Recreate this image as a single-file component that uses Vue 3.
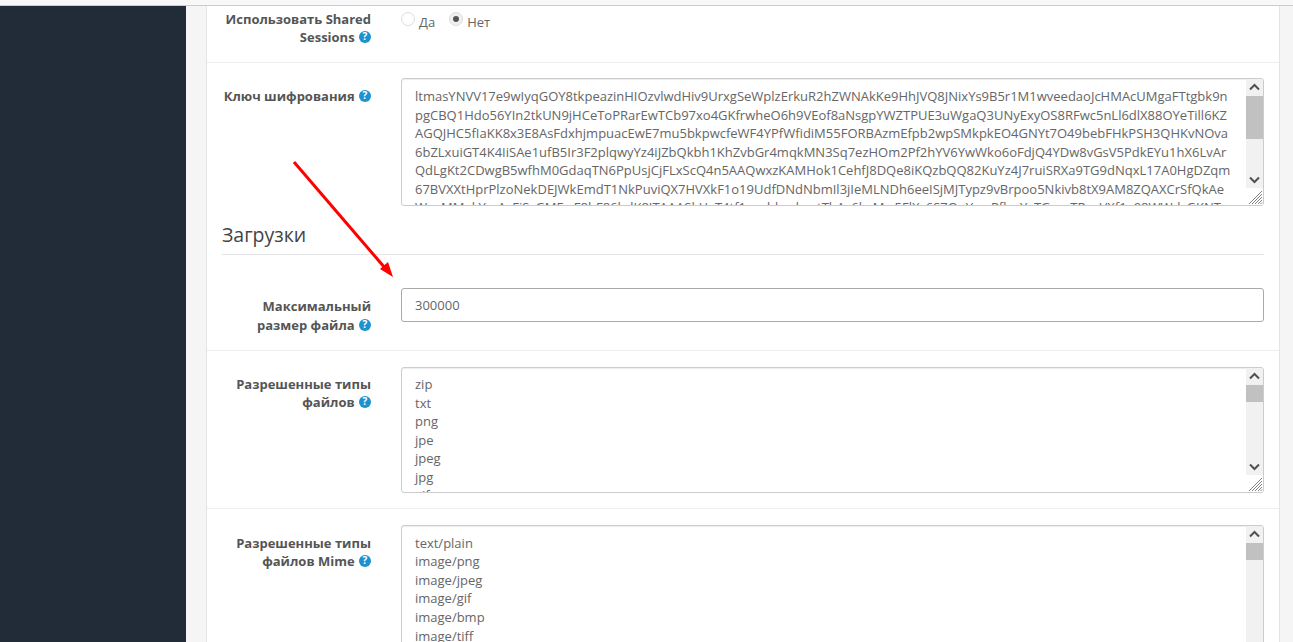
<script setup>
const keyLines = [
  'ltmasYNVV17e9wIyqGOY8tkpeazinHIOzvlwdHiv9UrxgSeWplzErkuR2hZWNAkKe9HhJVQ8JNixYs9B5r1M1wveedaoJcHMAcUMgaFTtgbk9n',
  'pgCBQ1Hdo56YIn2tkUN9jHCeToPRarEwTCb97xo4GKfrwheO6h9VEof8aNsgpYWZTPUE3uWgaQ3UNyExyOS8RFwc5nLl6dlX88OYeTill6KZ',
  'AGQJHC5fIaKK8x3E8AsFdxhjmpuacEwE7mu5bkpwcfeWF4YPfWfidiM55FORBAzmEfpb2wpSMkpkEO4GNYt7O49bebFHkPSH3QHKvNOva',
  '6bZLxuiGT4K4IiSAe1ufB5Ir3F2plqwyYz4iJZbQkbh1KhZvbGr4mqkMN3Sq7ezHOm2Pf2hYV6YwWko6oFdjQ4YDw8vGsV5PdkEYu1hX6LvAr',
  'QdLgKt2CDwgB5wfhM0GdaqTN6PpUsjCjFLxScQ4n5AAQwxzKAMHok1CehfJ8DQe8iKQzbQQ82KuYz4J7ruiSRXa9TG9dNqxL17A0HgDZqm',
  '67BVXXtHprPlzoNekDEJWkEmdT1NkPuviQX7HVXkF1o19UdfDNdNbmIl3jIeMLNDh6eeISjMJTypz9vBrpoo5Nkivb8tX9AM8ZQAXCrSfQkAe',
  'WsoMMakYmAsFiSzGMEwF8hF86bdK8ITAAAShVoT4tf1wsddzxdwntTbAs6bcMw5FlXc6S7OuYowPfkwYyTGmoTRaxVXf1g98WWdzGKNT'
]
const typeLines = ['zip', 'txt', 'png', 'jpe', 'jpeg', 'jpg', 'gif']
const mimeLines = ['text/plain', 'image/png', 'image/jpeg', 'image/gif', 'image/bmp', 'image/tiff', 'image/svg+xml']
</script>

<template>
  <div class="page">
    <div class="topbar"></div>
    <div class="body">
      <aside class="sidebar"></aside>
      <main class="gutter">
        <section class="panel">
          <div class="row row-radio">
            <div class="label">
              Использовать Shared<br />Sessions
              <svg class="help" viewBox="0 0 12 12"><circle cx="6" cy="6" r="6" fill="#1e91cf" /><text x="6" y="9.4" text-anchor="middle" class="help-mark">?</text></svg>
            </div>
            <div class="radios">
              <span class="radio"></span><span class="radio-text">Да</span>
              <span class="radio checked"></span><span class="radio-text">Нет</span>
            </div>
          </div>

          <div class="row row-key">
            <div class="label">
              Ключ шифрования
              <svg class="help" viewBox="0 0 12 12"><circle cx="6" cy="6" r="6" fill="#1e91cf" /><text x="6" y="9.4" text-anchor="middle" class="help-mark">?</text></svg>
            </div>
            <div class="area area-key">
              <div class="area-text"><div v-for="l in keyLines" :key="l">{{ l }}</div></div>
              <div class="scroll">
                <svg class="arrow" viewBox="0 0 17 17"><path d="M4 10.5 8.5 6 13 10.5" /></svg>
                <div class="track"><div class="thumb thumb-key"></div></div>
                <svg class="arrow" viewBox="0 0 17 17"><path d="M4 6.5 8.5 11 13 6.5" /></svg>
              </div>
              <svg class="grip" viewBox="0 0 15 15"><path d="M14 1 1 14M14 4 4 14M14 7 7 14M14 10 10 14M14 12.5 12.5 14" /></svg>
            </div>
          </div>

          <div class="heading-wrap">
            <h3 class="heading">Загрузки</h3>
          </div>

          <div class="row row-size">
            <div class="label">
              Максимальный<br />размер файла
              <svg class="help" viewBox="0 0 12 12"><circle cx="6" cy="6" r="6" fill="#1e91cf" /><text x="6" y="9.4" text-anchor="middle" class="help-mark">?</text></svg>
            </div>
            <div class="input">300000</div>
          </div>

          <div class="row row-types">
            <div class="label">
              Разрешенные типы<br />файлов
              <svg class="help" viewBox="0 0 12 12"><circle cx="6" cy="6" r="6" fill="#1e91cf" /><text x="6" y="9.4" text-anchor="middle" class="help-mark">?</text></svg>
            </div>
            <div class="area area-list">
              <div class="area-text"><div v-for="l in typeLines" :key="l">{{ l }}</div></div>
              <div class="scroll">
                <svg class="arrow" viewBox="0 0 17 17"><path d="M4 10.5 8.5 6 13 10.5" /></svg>
                <div class="track"><div class="thumb thumb-list"></div></div>
                <svg class="arrow" viewBox="0 0 17 17"><path d="M4 6.5 8.5 11 13 6.5" /></svg>
              </div>
              <svg class="grip" viewBox="0 0 15 15"><path d="M14 1 1 14M14 4 4 14M14 7 7 14M14 10 10 14M14 12.5 12.5 14" /></svg>
            </div>
          </div>

          <div class="row row-mime">
            <div class="label">
              Разрешенные типы<br />файлов Mime
              <svg class="help" viewBox="0 0 12 12"><circle cx="6" cy="6" r="6" fill="#1e91cf" /><text x="6" y="9.4" text-anchor="middle" class="help-mark">?</text></svg>
            </div>
            <div class="area area-list">
              <div class="area-text"><div v-for="l in mimeLines" :key="l">{{ l }}</div></div>
              <div class="scroll">
                <svg class="arrow" viewBox="0 0 17 17"><path d="M4 10.5 8.5 6 13 10.5" /></svg>
                <div class="track"><div class="thumb thumb-list"></div></div>
                <svg class="arrow" viewBox="0 0 17 17"><path d="M4 6.5 8.5 11 13 6.5" /></svg>
              </div>
              <svg class="grip" viewBox="0 0 15 15"><path d="M14 1 1 14M14 4 4 14M14 7 7 14M14 10 10 14M14 12.5 12.5 14" /></svg>
            </div>
          </div>
        </section>
      </main>
    </div>

    <svg class="annotation" viewBox="0 0 1293 642">
      <path d="M294 162 385 268" stroke="#f00" stroke-width="3" fill="none" />
      <path d="M393 277 380 269 388 262Z" fill="#f00" />
    </svg>
  </div>
</template>

<style scoped>
.page {
  position: relative;
  width: 1293px;
  height: 642px;
  overflow: hidden;
  background: #f5f5f5;
  font-family: "Open Sans", sans-serif;
  font-size: 13px;
  line-height: 18.57px;
  color: #666;
}
.topbar {
  height: 5px;
  background: #f8f8fb;
  border-bottom: 1px solid #ccc;
}
.body {
  display: flex;
  height: 636px;
}
.sidebar {
  width: 186px;
  flex: none;
  background: #222c38;
}
.gutter {
  flex: 1;
  padding: 0 13px 0 20px;
  min-width: 0;
}
.panel {
  background: #fff;
  border-left: 1px solid #e4e4e4;
  border-right: 1px solid #e4e4e4;
  height: 100%;
  overflow: hidden;
}
.row {
  display: flex;
  align-items: flex-start;
  padding: 0 15px 0 0;
  border-bottom: 1px solid #ededed;
}
.label {
  width: 164px;
  flex: none;
  margin-right: 30px;
  text-align: right;
  font-weight: 700;
  color: #555;
}
.help {
  display: inline-block;
  width: 12px;
  height: 12px;
  vertical-align: -1px;
  margin-left: 1px;
  overflow: visible;
}
.help-mark {
  font-family: "Open Sans", sans-serif;
  font-size: 10px;
  font-weight: 700;
  fill: #fff;
}
.row-radio {
  height: 56px;
}
.row-radio .label {
  margin-top: 3.7px;
}
.radios {
  display: flex;
  align-items: flex-start;
  margin-top: 5px;
}
.radio {
  width: 14px;
  height: 14px;
  margin-top: 1px;
  border-radius: 50%;
  border: 1px solid #ddd;
  background: #fff;
  box-sizing: border-box;
  position: relative;
}
.radio.checked {
  background: #f0f0f0;
}
.radio.checked::after {
  content: "";
  position: absolute;
  inset: 3px;
  border-radius: 50%;
  background: #555;
}
.radio-text {
  margin: 2px 14px 0 4px;
  font-weight: 400;
}
.row-key {
  padding-top: 15px;
  border-bottom: none;
  height: 128px;
}
.row-key .label {
  margin-top: 9px;
}
.area {
  position: relative;
  flex: 1;
  min-width: 0;
  box-sizing: border-box;
  border: 1px solid #ccc;
  border-radius: 3px;
  background: #fff;
  overflow: hidden;
  box-shadow: inset 0 1px 1px rgba(0, 0, 0, 0.075);
}
.area-key {
  height: 128px;
}
.area-list {
  height: 126px;
}
.area-text {
  padding: 8px 13px;
  white-space: pre;
  overflow: hidden;
  height: 100%;
  box-sizing: border-box;
}
.row-types .area-text {
  padding-top: 7.1px;
}
.row-mime .area-text {
  padding-top: 7.7px;
}
.scroll {
  position: absolute;
  top: 0;
  right: 0;
  bottom: 17px;
  width: 17px;
  display: flex;
  flex-direction: column;
  background: #f1f1f1;
}
.arrow {
  width: 17px;
  height: 17px;
  flex: none;
  fill: none;
  stroke: #505050;
  stroke-width: 2;
}
.track {
  flex: 1;
}
.thumb {
  background: #c1c1c1;
}
.thumb-key {
  height: 43px;
}
.thumb-list {
  height: 17px;
}
.grip {
  position: absolute;
  right: 0;
  bottom: 0;
  width: 15px;
  height: 15px;
  fill: none;
  stroke: #808080;
  stroke-width: 1;
  background: #fff;
}
.heading-wrap {
  height: 49px;
  margin: 0 15px;
  box-sizing: border-box;
  border-bottom: 1px solid #e5e5e5;
  padding-top: 16px;
}
.heading {
  margin: 0;
  font-size: 19.5px;
  line-height: 26px;
  font-weight: 400;
  color: #444;
}
.row-size {
  padding-top: 33px;
  height: 62px;
}
.row-size .label {
  margin-top: 9px;
}
.input {
  flex: 1;
  min-width: 0;
  height: 34px;
  box-sizing: border-box;
  border: 1px solid #aaa;
  border-radius: 3px;
  padding: 7px 13px;
}
.row-types {
  padding-top: 16px;
  height: 141px;
}
.row-types .label {
  margin-top: 7.7px;
}
.row-mime {
  padding-top: 16px;
  height: 200px;
  border-bottom: none;
}
.row-mime .label {
  margin-top: 8.7px;
}
.row-mime .area-list {
  height: 180px;
}
.annotation {
  position: absolute;
  inset: 0;
  width: 1293px;
  height: 642px;
  pointer-events: none;
}
</style>
